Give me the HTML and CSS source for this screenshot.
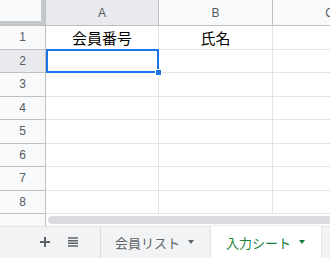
FILE: index.html
```html
<!DOCTYPE html>
<html lang="ja">
<head>
    <meta charset="UTF-8">
    <meta name="viewport" content="width=device-width, initial-scale=1.0">
    <title>会員管理</title>
    <link rel="stylesheet" href="styles.css">
</head>
<body>
    <div class="sheet">
        <div class="grid">
            <!-- 列ヘッダー -->
            <div class="corner"></div>
            <div class="colhead selected">A</div>
            <div class="colhead">B</div>
            <div class="colhead">C</div>

            <div class="rowhead">1</div>
            <div class="cell">会員番号</div>
            <div class="cell">氏名</div>
            <div class="cell"></div>

            <div class="rowhead selected">2</div>
            <div class="cell active"><span class="handle"></span></div>
            <div class="cell"></div>
            <div class="cell"></div>

            <div class="rowhead">3</div>
            <div class="cell"></div><div class="cell"></div><div class="cell"></div>
            <div class="rowhead">4</div>
            <div class="cell"></div><div class="cell"></div><div class="cell"></div>
            <div class="rowhead">5</div>
            <div class="cell"></div><div class="cell"></div><div class="cell"></div>
            <div class="rowhead">6</div>
            <div class="cell"></div><div class="cell"></div><div class="cell"></div>
            <div class="rowhead">7</div>
            <div class="cell"></div><div class="cell"></div><div class="cell"></div>
            <div class="rowhead">8</div>
            <div class="cell"></div><div class="cell"></div><div class="cell"></div>
        </div>
        <div class="hscroll">
            <div class="hscroll-corner"></div>
            <div class="thumb"></div>
        </div>
    </div>

    <div class="tabbar">
        <div class="tools">
            <svg class="icon" width="10" height="10" viewBox="0 0 10 10">
                <path d="M5 0v10M0 5h10" stroke="#5f6368" stroke-width="2"/>
            </svg>
            <svg class="icon" width="10" height="10" viewBox="0 0 10 10">
                <path d="M0 1h10M0 3.7h10M0 6.3h10M0 9h10" stroke="#5f6368" stroke-width="1.4"/>
            </svg>
        </div>
        <div class="tab">会員リスト<span class="caret"></span></div>
        <div class="tab current">入力シート<span class="caret"></span></div>
    </div>
</body>
</html>
```

FILE: styles.css
```css
body {
    margin: 0;
    width: 330px;
    height: 258px;
    overflow: hidden;
    background: #ffffff;
    font-family: "Liberation Sans", Arial, "Noto Sans CJK JP", sans-serif;
}
.sheet {
    height: 226px;
    overflow: hidden;
    display: flex;
    flex-direction: column;
}
.grid {
    display: grid;
    grid-template-columns: 46px 113px 114px 114px;
    grid-template-rows: 26px repeat(8, 23.5px);
    width: 387px;
}
.corner {
    background: #f8f9fa;
    border-right: 1px solid #c0c0c0;
    border-bottom: 1px solid #c0c0c0;
    box-shadow: inset -4px -4px 0 #c4c7cb;
}
.colhead {
    display: flex;
    align-items: center;
    justify-content: center;
    background: #f8f9fa;
    border-right: 1px solid #c0c0c0;
    border-bottom: 1px solid #c0c0c0;
    color: #575b5f;
    font-size: 12px;
}
.rowhead {
    display: flex;
    align-items: center;
    justify-content: center;
    background: #f8f9fa;
    border-right: 1px solid #c0c0c0;
    border-bottom: 1px solid #c0c0c0;
    color: #575b5f;
    font-size: 12px;
}
.colhead.selected, .rowhead.selected {
    background: #e8eaed;
}
.cell {
    display: flex;
    align-items: center;
    justify-content: center;
    border-right: 1px solid #e2e3e3;
    border-bottom: 1px solid #e2e3e3;
    font-family: "Noto Sans CJK JP", sans-serif;
    font-size: 15px;
    color: #000000;
}
.cell.active {
    position: relative;
}
.cell.active::after {
    content: "";
    position: absolute;
    top: -1px;
    left: 0;
    right: -1px;
    bottom: -1px;
    border: 2px solid #1a73e8;
}
.handle {
    position: absolute;
    right: -4px;
    bottom: -4px;
    width: 5px;
    height: 5px;
    background: #1a73e8;
    border: 1px solid #ffffff;
    z-index: 1;
}
.hscroll {
    flex: 1;
    display: flex;
    align-items: center;
    background: #ffffff;
}
.hscroll-corner {
    width: 45px;
    height: 100%;
    background: #f8f9fa;
    border-right: 1px solid #c0c0c0;
}
.thumb {
    flex: 1;
    height: 8px;
    margin-left: 2px;
    margin-right: -10px;
    border-radius: 4px;
    background: #dadce0;
}
.tabbar {
    display: flex;
    height: 32px;
    background: #f1f3f4;
    box-shadow: inset 0 1px 0 #e3e5e8;
    font-family: "Noto Sans CJK JP", sans-serif;
    font-size: 13px;
}
.tools {
    width: 101px;
    display: flex;
    align-items: center;
    gap: 18px;
    padding-left: 40px;
    box-sizing: border-box;
    border-right: 1px solid #dadce0;
}
.tab {
    display: flex;
    align-items: center;
    padding: 0 12px 0 14px;
    color: #5f6368;
}
.tab.current {
    margin-left: 5px;
    padding: 0 16px 0 15px;
    background: #ffffff;
    color: #188038;
    box-shadow: 0 0 2px rgba(60, 64, 67, 0.25);
}
.caret {
    margin-left: 8px;
    width: 0;
    height: 0;
    border-left: 3px solid transparent;
    border-right: 3px solid transparent;
    border-top: 4px solid currentColor;
}
```
